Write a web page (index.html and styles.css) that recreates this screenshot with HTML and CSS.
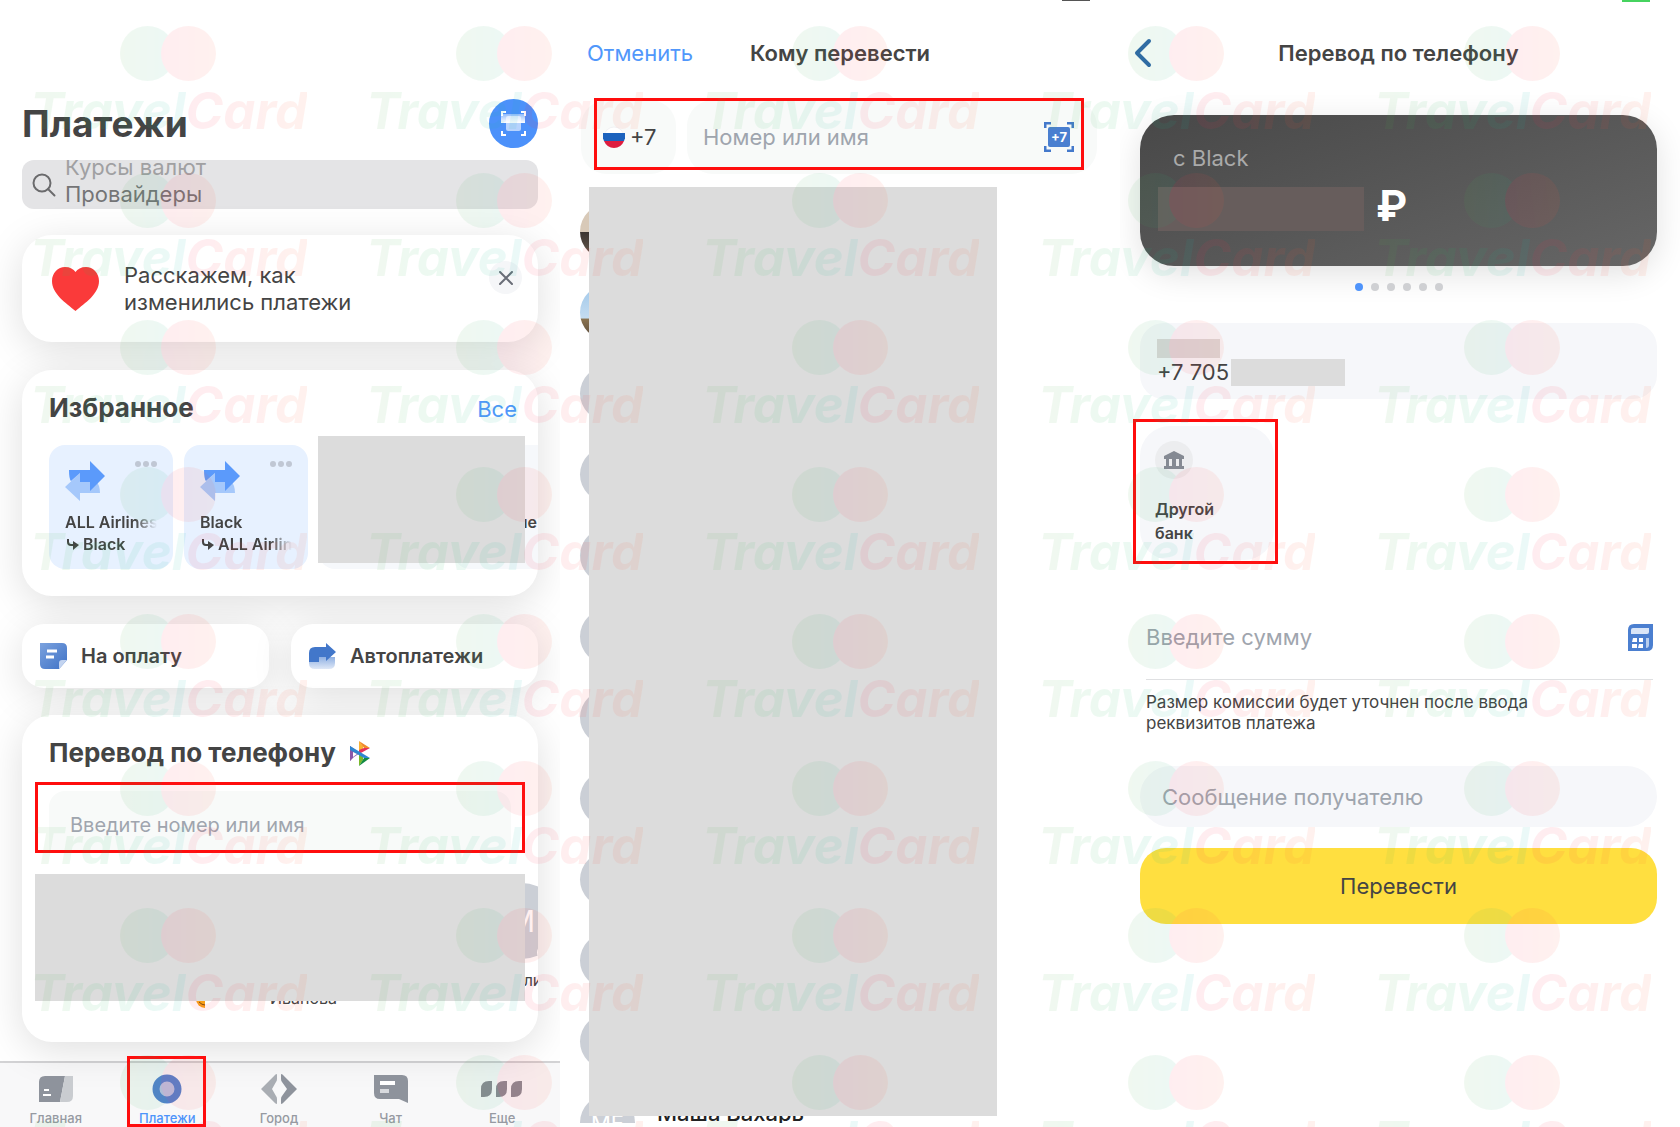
FILE: index.html
```html
<!DOCTYPE html>
<html lang="ru">

<head>
  <meta charset="utf-8">
  <meta name="viewport" content="width=device-width, initial-scale=1">
  <title>Перевод по телефону</title>
  <link rel="stylesheet" href="styles.css">
</head>

<body>
  <main class="board">

    <!-- Payments -->
    <section class="screen payments">
      <header class="payments-header">
        <h1>Платежи</h1>
        <button type="button" class="scan-btn" aria-label="Сканировать">
          <svg width="49" height="49" viewBox="0 0 49 49">
            <defs>
              <linearGradient id="scanFade" x1="0" y1="0" x2="0" y2="1">
                <stop offset="0" stop-color="#fff" stop-opacity=".4"/>
                <stop offset="1" stop-color="#fff" stop-opacity="1"/>
              </linearGradient>
            </defs>
            <path d="M13 17v-4h4M32 13h4v4M36 32v4h-4M17 36h-4v-4" fill="none" stroke="#fff" stroke-width="2"/>
            <rect x="17" y="17" width="15" height="15" rx="2" fill="#fff" opacity=".6"/>
            <path d="M12 15h24v9H12z" fill="url(#scanFade)"/>
          </svg>
        </button>
      </header>

      <label class="search">
        <svg width="24" height="24" viewBox="0 0 24 24" fill="none" stroke="#6b6b6d" stroke-width="2" stroke-linecap="round">
          <circle cx="10" cy="10" r="8.500"/>
          <path d="M16 16l6.500 6.500"/>
        </svg>
        <span class="search-hints">
          <span>Курсы валют</span>
          <input type="text" name="search" placeholder="Провайдеры">
        </span>
      </label>

      <article class="card notice">
        <svg width="47" height="44" viewBox="0 0 47 44">
          <path d="M23.500 44C14 36 0 27 0 14 0 6 6 0 13 0c5 0 8.500 2 10.500 5C25.500 2 29 0 34 0c7 0 13 6 13 14 0 13-14 22-23.500 30z" fill="#fa3a3a"/>
        </svg>
        <p>Расскажем, как<br>изменились платежи</p>
        <button type="button" class="close-btn" aria-label="Закрыть">
          <svg width="14" height="14" viewBox="0 0 14 14" stroke="#6a6e78" stroke-width="2" stroke-linecap="round">
            <path d="M1 1l12 12M13 1L1 13"/>
          </svg>
        </button>
      </article>

      <article class="card favourites">
        <header>
          <h2>Избранное</h2>
          <a href="#">Все</a>
        </header>
        <div class="tiles">
          <div class="tile">
            <div class="tile-top">
              <svg width="40" height="40" viewBox="0 0 40 40">
                <path d="M0 26L15 12v8h16q4 4 4 12H15v8z" fill="#a5c8fb"/>
                <path d="M4 9h21V0l15 15-15 15v-9H15v-9L6 20Q4 18 4 9z" fill="#5b9afb"/>
              </svg>
              <svg width="22" height="6" viewBox="0 0 22 6" fill="#c0c7d4">
                <circle cx="3" cy="3" r="3"/><circle cx="11" cy="3" r="3"/><circle cx="19" cy="3" r="3"/>
              </svg>
            </div>
            <p class="fade">ALL Airlines</p>
            <p class="fade"><svg class="turn" width="12" height="11" viewBox="0 0 12 11"><path d="M1 0v3q0 3 3 3h3" fill="none" stroke="#444" stroke-width="2"/><path d="M6 2l6 4-6 5z" fill="#444"/></svg>Black</p>
          </div>
          <div class="tile">
            <div class="tile-top">
              <svg width="40" height="40" viewBox="0 0 40 40">
                <path d="M0 26L15 12v8h16q4 4 4 12H15v8z" fill="#a5c8fb"/>
                <path d="M4 9h21V0l15 15-15 15v-9H15v-9L6 20Q4 18 4 9z" fill="#5b9afb"/>
              </svg>
              <svg width="22" height="6" viewBox="0 0 22 6" fill="#c0c7d4">
                <circle cx="3" cy="3" r="3"/><circle cx="11" cy="3" r="3"/><circle cx="19" cy="3" r="3"/>
              </svg>
            </div>
            <p class="fade">Black</p>
            <p class="fade"><svg class="turn" width="12" height="11" viewBox="0 0 12 11"><path d="M1 0v3q0 3 3 3h3" fill="none" stroke="#444" stroke-width="2"/><path d="M6 2l6 4-6 5z" fill="#444"/></svg>ALL Airlines</p>
          </div>
          <div class="tile tile-grey"></div>
          <div class="tile tile-grey">
            <div class="tile-top"></div>
            <p class="name-end">ые</p>
          </div>
        </div>
        <div class="cover cover-tiles"></div>
      </article>

      <div class="shortcuts">
        <button type="button" class="card shortcut">
          <svg width="27" height="26" viewBox="0 0 27 26">
            <defs>
              <linearGradient id="noteFill" x1="0" y1="0" x2="1" y2="1">
                <stop offset="0" stop-color="#7ba2de"/>
                <stop offset="1" stop-color="#3f72c6"/>
              </linearGradient>
            </defs>
            <path d="M0 0h22q5 0 5 5v12l-8 9H5q-5 0-5-5z" fill="url(#noteFill)"/>
            <path d="M27 17l-8 9v-6q0-3 3-3z" fill="#c3d4f0"/>
            <path d="M7 8h10M6 14h8" stroke="#fff" stroke-width="3"/>
          </svg>
          На оплату
        </button>
        <button type="button" class="card shortcut">
          <svg width="27" height="26" viewBox="0 0 27 26">
            <defs>
              <linearGradient id="autoFill" x1="0" y1="0" x2="0" y2="1">
                <stop offset="0" stop-color="#8fb0e2"/>
                <stop offset="1" stop-color="#dfe8f7"/>
              </linearGradient>
            </defs>
            <path d="M0 14h26v6q0 6-6 6H6q-6 0-6-6z" fill="url(#autoFill)"/>
            <path d="M0 19v-9q0-6 6-6h11V0l10 9-10 9v-4h-7v5z" fill="#4277ca"/>
          </svg>
          Автоплатежи
        </button>
      </div>

      <article class="card transfer">
        <h2>Перевод по телефону
          <svg width="20" height="25" viewBox="0 0 20 25">
            <path d="M0 5v15l4-6v-3z" fill="#6a4fa3"/>
            <path d="M0 5l10 7-6 4L0 20z" fill="#8b57a8"/>
            <path d="M9 0v12l4-4V5z" fill="#f9b233"/>
            <path d="M9 0l11 7h-6z" fill="#f08a2c"/>
            <path d="M20 7l-11 6V9l5-2z" fill="#e5305a"/>
            <path d="M9 12v13l4-6v-3z" fill="#7ab829"/>
            <path d="M9 25l11-8h-6z" fill="#128a43"/>
            <path d="M0 5l20 12h-6L0 9z" fill="#2f86d0"/>
            <path d="M3 11l4 2-4 3z" fill="#fff"/>
          </svg>
        </h2>
        <div class="phone-field">
          <input type="text" name="phone" aria-label="Номер или имя" placeholder="Введите номер или имя">
        </div>
        <ul class="contacts">
          <li></li>
          <li>
            <svg class="smile" width="10" height="20" viewBox="0 0 10 20"><circle cx="10" cy="10" r="9" fill="#f9a01b"/><path d="M4 13q3 3 6 3" stroke="#7a4a12" fill="none"/></svg>
          </li>
          <li><span class="surname">Иванова</span></li>
          <li></li>
          <li>
            <span class="avatar">М<i class="badge"></i></span>
            <span class="name-part">ли</span>
          </li>
        </ul>
        <div class="cover cover-contacts"></div>
      </article>

      <nav class="tabbar">
        <a href="#">
          <svg width="34" height="26" viewBox="0 0 34 26">
            <path d="M6 0h20l-5 26H0V6q0-6 6-6z" fill="#8e939c"/>
            <path d="M26 0h8v20q0 6-6 6h-7z" fill="#c9ccd0"/>
            <path d="M5 14h5M4 19h8" stroke="#fff" stroke-width="2"/>
          </svg>
          Главная
        </a>
        <a href="#" class="active">
          <svg width="30" height="30" viewBox="0 0 30 30">
            <circle cx="15" cy="15" r="11" fill="#b9c1df" stroke="#5482cc" stroke-width="7"/>
          </svg>
          Платежи
          <span class="frame"></span>
        </a>
        <a href="#">
          <svg width="36" height="32" viewBox="0 0 36 32">
            <path d="M0 16L14 2q2-2 2 0v4q0 2-1 3l-4 7 4 7q1 1 1 3v4q0 2-2 0z" fill="#a9adb3"/>
            <path d="M36 16L22 2q-2-2-2 0v4q0 2 1 3l5 7-5 7q-1 1-1 3v4q0 2 2 0z" fill="#8e939c"/>
          </svg>
          Город
        </a>
        <a href="#">
          <svg width="34" height="28" viewBox="0 0 34 28">
            <path d="M0 0h28q6 0 6 6v22l-9-4H6q-6 0-6-6z" fill="#8e939c"/>
            <path d="M6 8h15" stroke="#fff" stroke-width="4"/>
            <path d="M6 16h9" stroke="#d8dade" stroke-width="4"/>
          </svg>
          Чат
        </a>
        <a href="#">
          <svg width="42" height="16" viewBox="0 0 42 16" fill="#8b8a92">
            <path d="M0 16V8q0-8 8-8h3v8q0 8-8 8zM15 16V8q0-8 8-8h3v8q0 8-8 8zM30 16V8q0-8 8-8h3v8q0 8-8 8z"/>
          </svg>
          Еще
        </a>
      </nav>
    </section>

    <!-- Contact picker -->
    <section class="screen picker">
      <span class="battery"></span>
      <header class="screen-header">
        <a href="#" class="cancel">Отменить</a>
        <h2>Кому перевести</h2>
      </header>
      <div class="number-row">
        <button type="button" class="country">
          <svg width="22" height="22" viewBox="0 0 22 22">
            <circle cx="11" cy="11" r="10" fill="#fff" stroke="#f2f2f4"/>
            <path d="M0 7h22q1 4-1 8H1Q-1 11 0 7z" fill="#1c62bd"/>
            <path d="M1 15h20q-3 7-10 7T1 15z" fill="#dd1c3f"/>
          </svg>
          +7
        </button>
        <div class="number-field">
          <input type="text" name="recipient" aria-label="Получатель" placeholder="Номер или имя">
          <svg width="30" height="30" viewBox="0 0 30 30">
            <path d="M1 6V1h6M23 1h6v5M29 24v5h-6M7 29H1v-5" fill="none" stroke="#4479cb" stroke-width="3"/>
            <rect x="4" y="5" width="22" height="20" rx="2" fill="#4a7fd0"/>
            <text x="15" y="20" text-anchor="middle" class="scan-text">+7</text>
          </svg>
        </div>
        <span class="frame"></span>
      </div>
      <ul class="people">
        <li><span class="face photo-one"></span></li>
        <li><span class="face photo-two"></span></li>
        <li><span class="face"></span></li>
        <li><span class="face"></span></li>
        <li><span class="face"></span></li>
        <li><span class="face"></span></li>
        <li><span class="face"></span></li>
        <li><span class="face"></span></li>
        <li><span class="face"></span></li>
        <li><span class="face"></span></li>
        <li><span class="face"></span></li>
        <li><span class="face">МЕ</span><span class="person">Маша Вахарь</span></li>
      </ul>
      <div class="cover cover-people"></div>
    </section>

    <!-- Transfer form -->
    <section class="screen sending">
      <span class="battery charged"></span>
      <header class="screen-header">
        <a href="#" class="back" aria-label="Назад">
          <svg width="18" height="30" viewBox="0 0 18 30" fill="none" stroke="#2f66a9" stroke-width="4" stroke-linecap="round" stroke-linejoin="round">
            <path d="M15 3L3 15l12 12"/>
          </svg>
        </a>
        <h2>Перевод по телефону</h2>
      </header>

      <div class="account">
        <p>с Black</p>
        <div class="balance">
          <span class="amount"></span>
          <span class="ruble">₽</span>
        </div>
      </div>
      <div class="pager">
        <i class="on"></i><i></i><i></i><i></i><i></i><i></i>
      </div>

      <div class="recipient">
        <span class="hidden-name"></span>
        <p>+7 705 <span class="hidden-number"></span></p>
      </div>

      <button type="button" class="bank">
        <span class="bank-icon">
          <svg width="20" height="18" viewBox="0 0 20 18" fill="#858a93">
            <path fill-rule="evenodd" d="M10 0l10 5v3h-2v7h2v3H0v-3h2V8H0V5zM5 8v7h3V8zM12 8v7h3V8z"/>
          </svg>
        </span>
        Другой<br>банк
        <span class="frame"></span>
      </button>

      <div class="sum">
        <input type="text" name="sum" aria-label="Сумма" placeholder="Введите сумму">
        <svg width="25" height="27" viewBox="0 0 25 27">
          <path d="M6 0h19v21q0 6-6 6H0V6q0-6 6-6z" fill="#4b7fd0"/>
          <path d="M5 4h16v4q0 2-2 2H3V6q0-2 2-2z" fill="#d9e5f7"/>
          <path d="M5 14h4v4H4zM11 14h4v4h-4zM4 20h5v4H4zM11 20h4v4h-5z" fill="#fff"/>
          <path d="M18 14h3v7q0 3-3 3z" fill="#b7cdee"/>
        </svg>
      </div>
      <p class="fee">Размер комиссии будет уточнен после ввода реквизитов платежа</p>
      <input type="text" name="message" class="message" aria-label="Сообщение" placeholder="Сообщение получателю">
      <button type="submit" class="send">Перевести</button>
    </section>
  </main>

  <div id="watermark" class="watermark" aria-hidden="true"></div>

  <script>
    const watermark = document.getElementById('watermark');

    for (let i = 0; i < 40; i++) {
      const mark = document.createElement('div');
      mark.className = 'mark';
      mark.innerHTML = '<span class="rings"><i></i><i></i></span><b>Travel</b><b class="warm">Card</b>';
      watermark.appendChild(mark);
    }
  </script>
</body>

</html>
```
FILE: styles.css
```css
* {
  box-sizing: border-box;
}
body {
  position: relative;
  margin: 0;
  overflow-x: hidden;
  font-family: Inter, "Liberation Sans", sans-serif;
  font-size: 22px;
  color: #444;
  background-color: #fff;
}
h1, h2, p, ul {
  margin: 0;
  padding: 0;
}
ul {
  list-style-type: none;
}
a {
  color: #5097fb;
  text-decoration: none;
}
button, input {
  font: inherit;
  color: inherit;
  border: 0;
  padding: 0;
  background: none;
}
input {
  min-width: 0;
  outline: none;
}
input::placeholder {
  color: #9fa5ae;
  opacity: 1;
}
svg {
  display: block;
  flex: none;
}
.board {
  display: grid;
  grid-template-columns: repeat(3, 1fr);
  min-height: 100vh;
}
.screen {
  position: relative;
  min-width: 0;
  overflow: hidden;
}
.frame {
  position: absolute;
  border: 3px solid #ff0d0d;
}
.cover {
  position: absolute;
  background-color: #dcdcdc;
}

/* payments */
.payments {
  display: flex;
  flex-direction: column;
  padding-top: 99px;
}
.payments-header {
  display: flex;
  justify-content: space-between;
  align-items: center;
  margin: 0 22px 12px;
}
h1 {
  font-size: 37px;
  line-height: 48px;
}
.scan-btn {
  width: 49px;
  height: 49px;
  border-radius: 50%;
  background-color: #4c91fa;
}
.search {
  display: flex;
  align-items: center;
  gap: 9px;
  height: 49px;
  margin: 0 22px 26px;
  padding-left: 10px;
  border-radius: 12px;
  background-color: #e4e4e6;
  overflow: hidden;
}
.search-hints {
  display: flex;
  flex-direction: column;
  padding-bottom: 8px;
  line-height: 27px;
  color: #a0a0a2;
}
.search-hints input {
  height: 27px;
}
.search-hints input::placeholder {
  color: #747476;
}
.card {
  position: relative;
  margin: 0 22px 28px;
  border-radius: 30px;
  background-color: #fff;
  box-shadow: 0 8px 40px rgba(0, 0, 0, 0.13);
}
.notice {
  display: flex;
  align-items: center;
  gap: 25px;
  height: 107px;
  padding: 0 16px 0 30px;
  line-height: 27px;
}
.close-btn {
  display: flex;
  align-items: center;
  justify-content: center;
  width: 33px;
  height: 33px;
  margin: 0 0 22px auto;
  border-radius: 50%;
  background-color: #f5f6f8;
}
.favourites {
  height: 226px;
  padding-top: 20px;
}
.favourites header {
  display: flex;
  justify-content: space-between;
  align-items: baseline;
  padding: 0 21px 0 27px;
}
.card h2 {
  font-size: 26px;
  line-height: 36px;
}
.tiles {
  display: flex;
  gap: 11px;
  margin-top: 19px;
  padding-left: 27px;
  overflow: hidden;
}
.tile {
  flex: none;
  width: 124px;
  height: 124px;
  padding: 16px 16px 0;
  border-radius: 16px;
  background-color: #e7f1ff;
  font-size: 16px;
  font-weight: 600;
  line-height: 22px;
}
.tile-grey {
  background-color: #f6f8fb;
}
.tile-top {
  display: flex;
  justify-content: space-between;
  height: 50px;
}
.fade {
  display: flex;
  align-items: center;
  overflow: hidden;
  white-space: nowrap;
  mask-image: linear-gradient(to right, #000 76%, transparent);
}
.turn {
  margin: 0 4px 0 2px;
}
.name-end {
  padding-left: 45px;
}
.cover-tiles {
  top: 66px;
  right: 13px;
  width: 207px;
  height: 127px;
}
.shortcuts {
  display: grid;
  grid-template-columns: 1fr 1fr;
  gap: 22px;
  margin: 0 22px 27px;
}
.shortcut {
  display: flex;
  align-items: center;
  gap: 14px;
  height: 64px;
  margin: 0;
  padding-left: 18px;
  border-radius: 22px;
  font-size: 20px;
  font-weight: 600;
}
.transfer {
  height: 327px;
  margin-bottom: 19px;
  padding-top: 20px;
}
.transfer h2 {
  display: flex;
  align-items: center;
  gap: 14px;
  padding-left: 27px;
}
.phone-field {
  height: 71px;
  margin: 11px 13px 0;
  padding: 6px 11px 0;
  border: 3px solid #ff0d0d;
}
.phone-field input {
  width: 100%;
  height: 59px;
  padding: 8px 21px 0;
  border-radius: 16px 16px 0 0;
  background-color: #f8faf9;
  font-size: 20px;
}
.contacts {
  display: grid;
  grid-template-columns: repeat(5, 109px);
  height: 140px;
  margin: 30px 0 0 9px;
  overflow: hidden;
  font-size: 16px;
  line-height: 20px;
  text-align: center;
}
.avatar {
  position: relative;
  display: block;
  width: 76px;
  height: 76px;
  margin: 0 auto 11px;
  border-radius: 50%;
  background-color: #cbcfd6;
  color: #fff;
  font-size: 30px;
  line-height: 76px;
}
.badge {
  position: absolute;
  right: 6px;
  bottom: -2px;
  width: 17px;
  height: 17px;
  border: 2px solid #fff;
  border-radius: 50%;
  background-color: #ffd22e;
}
.name-part {
  padding-left: 23px;
}
.surname {
  display: block;
  padding-top: 105px;
}
.smile {
  margin: 106px 0 0 55px;
}
.cover-contacts {
  top: 159px;
  right: 13px;
  left: 13px;
  height: 127px;
}
.tabbar {
  display: grid;
  grid-template-columns: repeat(5, 1fr);
  flex: 1;
  min-height: 66px;
  padding-right: 2px;
  border-top: 2px solid #d3d3d5;
  background-color: #f8f8f9;
}
.tabbar a {
  position: relative;
  display: grid;
  grid-template-rows: 1fr 18px;
  justify-items: center;
  align-items: center;
  padding-top: 6px;
  color: #969aa2;
  font-size: 13px;
  font-weight: 500;
}
.tabbar .active {
  color: #4e94fb;
}
.tabbar .frame {
  top: -7px;
  bottom: 0;
  left: 15px;
  width: 79px;
}

/* contact picker */
.battery {
  position: absolute;
  top: 0;
  right: 30px;
  width: 28px;
  height: 1px;
  background-color: #555;
}
.charged {
  height: 2px;
  background-color: #46d35f;
}
.screen-header {
  display: flex;
  align-items: center;
  justify-content: center;
  position: relative;
  height: 100px;
  padding-top: 6px;
}
.screen-header h2 {
  font-size: 22px;
  font-weight: 600;
}
.cancel, .back {
  position: absolute;
  left: 27px;
}
.number-row {
  position: relative;
  display: flex;
  gap: 11px;
  padding: 0 23px 0 21px;
}
.country, .number-field {
  display: flex;
  align-items: center;
  height: 74px;
  border-radius: 26px;
  background-color: #f8faf9;
}
.country {
  gap: 5px;
  width: 97px;
  padding-left: 22px;
}
.number-field {
  flex: 1;
  padding: 0 23px 0 16px;
}
.number-field input {
  flex: 1;
}
.scan-text {
  fill: #fff;
  font-size: 13px;
  font-weight: 700;
}
.number-row .frame {
  top: -2px;
  right: 36px;
  left: 34px;
  height: 72px;
}
.people {
  height: 949px;
  padding-top: 29px;
  overflow: hidden;
}
.people li {
  display: flex;
  align-items: center;
  gap: 22px;
  height: 81px;
  padding: 0 0 24px 20px;
  color: #222;
}
.person {
  padding-bottom: 20px;
  font-weight: 500;
}
.face {
  width: 55px;
  height: 55px;
  border-radius: 50%;
  background-color: #cbcfd6;
  color: #fff;
  line-height: 56px;
  text-align: center;
}
.photo-one {
  background: linear-gradient(#d8c9b8 50%, #3b3430 50%, #6b5d50);
}
.photo-two {
  background: linear-gradient(#9fc7ea, #c4dcf0 60%, #8a7350 62%, #54463a);
}
.cover-people {
  top: 187px;
  right: 123px;
  bottom: 11px;
  left: 29px;
}

/* transfer form */
.sending {
  padding: 0 23px 0 20px;
}
.back {
  left: -6px;
}
.account {
  height: 151px;
  margin-top: 15px;
  padding: 30px 18px 0;
  border-radius: 34px;
  background: linear-gradient(160deg, #484848, #666);
  box-shadow: 0 8px 32px rgba(0, 0, 0, 0.12);
  color: #aaa;
  line-height: 26px;
}
.account p {
  padding-left: 15px;
}
.balance {
  display: flex;
  align-items: center;
  gap: 12px;
  margin-top: 16px;
}
.amount {
  width: 206px;
  height: 44px;
  background-color: #675d5c;
}
.ruble {
  padding-bottom: 6px;
  color: #fff;
  font-size: 42px;
  font-weight: 700;
  line-height: 38px;
}
.pager {
  display: flex;
  justify-content: center;
  gap: 8px;
  margin-top: 17px;
}
.pager i {
  width: 8px;
  height: 8px;
  border-radius: 50%;
  background-color: #cfd0d3;
}
.pager .on {
  background-color: #4f94fb;
}
.recipient {
  height: 76px;
  margin-top: 32px;
  padding: 16px 17px;
  border-radius: 24px;
  background-color: #f6f7fa;
}
.hidden-name {
  display: block;
  width: 63px;
  height: 19px;
  background-color: #dcd8d8;
}
.recipient p {
  display: flex;
  align-items: center;
  gap: 2px;
  line-height: 28px;
}
.hidden-number {
  width: 114px;
  height: 27px;
  background-color: #dcdcdc;
}
.bank {
  position: relative;
  display: block;
  width: 134px;
  height: 134px;
  margin-top: 27px;
  padding: 0 15px;
  border-radius: 30px;
  background-color: #f6f7fa;
  font-size: 16px;
  font-weight: 600;
  line-height: 24px;
  text-align: left;
}
.bank-icon {
  display: flex;
  align-items: center;
  justify-content: center;
  width: 38px;
  height: 38px;
  margin-bottom: 18px;
  border-radius: 50%;
  background-color: #ecedef;
}
.bank .frame {
  top: -7px;
  right: -4px;
  bottom: -4px;
  left: -7px;
}
.sum {
  display: flex;
  align-items: center;
  height: 85px;
  margin: 35px 4px 0 6px;
  border-bottom: 1px solid #dfe0e2;
}
.sum input {
  flex: 1;
}
.fee {
  max-width: 420px;
  margin: 12px 6px 0;
  font-size: 17px;
  line-height: 21px;
}
.message {
  display: block;
  width: 100%;
  height: 61px;
  margin-top: 32px;
  padding: 0 22px;
  border-radius: 31px;
  background-color: #f6f7fa;
}
.send {
  width: 100%;
  height: 76px;
  margin-top: 21px;
  border-radius: 26px;
  background-color: #ffdf40;
}

/* watermark */
.watermark {
  position: absolute;
  inset: 0;
  display: grid;
  grid-template-columns: repeat(5, 336px);
  grid-auto-rows: 147px;
  padding-top: 26px;
  overflow: hidden;
  pointer-events: none;
  opacity: 0.08;
}
.mark {
  padding-left: 30px;
  font-size: 51px;
  font-style: italic;
  font-feature-settings: "cv11";
  line-height: 60px;
  white-space: nowrap;
}
.rings {
  display: flex;
  height: 55px;
  padding-left: 90px;
}
.rings i {
  width: 55px;
  height: 55px;
  border-radius: 50%;
  background: linear-gradient(to right, #4cb050, #1fb38a);
}
.rings i + i {
  margin-left: -14px;
  background: linear-gradient(to right, #ff2d55, #ff5a3c);
}
.mark b {
  color: transparent;
  background: linear-gradient(to right, #58b04a, #19c060 50%, #12b8b0);
  background-clip: text;
}
.mark .warm {
  background-image: linear-gradient(to right, #ff2050, #ff6030);
}
```
